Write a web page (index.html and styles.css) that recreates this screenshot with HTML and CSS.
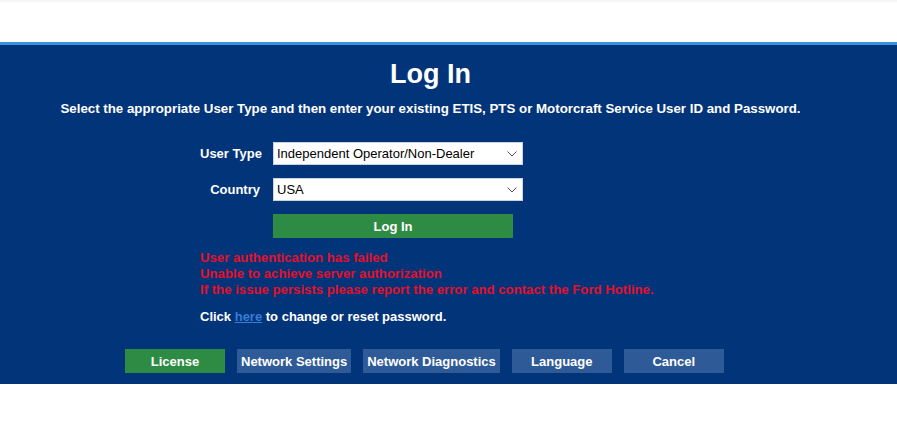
FILE: index.html
```html
<!DOCTYPE html>
<html>
<head>
<meta charset="utf-8">
<link rel="stylesheet" href="styles.css">
</head>
<body>
<div class="top"></div>
<main class="panel">
  <div class="content">
    <h1 class="title">Log In</h1>
    <p class="intro">Select the appropriate User Type and then enter your existing ETIS, PTS or Motorcraft Service User ID and Password.</p>
    <div class="form">
      <label class="label">User Type</label>
      <div class="select"><span>Independent Operator/Non-Dealer</span><svg class="chev" width="10" height="6" viewBox="0 0 10 6"><path d="M0.5 0.5 L5 5 L9.5 0.5" fill="none" stroke="#555" stroke-width="1"/></svg></div>
      <label class="label">Country</label>
      <div class="select"><span>USA</span><svg class="chev" width="10" height="6" viewBox="0 0 10 6"><path d="M0.5 0.5 L5 5 L9.5 0.5" fill="none" stroke="#555" stroke-width="1"/></svg></div>
      <span></span>
      <button class="btn btn-green login">Log In</button>
    </div>
    <div class="errors">
      <div>User authentication has failed</div>
      <div>Unable to achieve server authorization</div>
      <div>If the issue persists please report the error and contact the Ford Hotline.</div>
    </div>
    <p class="reset">Click <a href="#">here</a> to change or reset password.</p>
    <div class="actions">
      <button class="btn btn-green w100">License</button>
      <button class="btn btn-blue">Network Settings</button>
      <button class="btn btn-blue">Network Diagnostics</button>
      <button class="btn btn-blue w100">Language</button>
      <button class="btn btn-blue w100">Cancel</button>
    </div>
  </div>
</main>
</body>
</html>
```
FILE: styles.css
```css
* { box-sizing: border-box; }
html, body { margin: 0; padding: 0; background: #fff; }
body { font-family: "Liberation Sans", Arial, sans-serif; }
.top {
  height: 42px;
  background: linear-gradient(#f2f2f2 0, #fff 3px);
}
.panel {
  background: #023479;
  border-top: 3px solid #3b93dc;
  height: 342px;
}
.content {
  width: 861px;
  padding-top: 14px;
}
.title {
  margin: 0;
  text-align: center;
  color: #fff;
  font-size: 27px;
  font-weight: bold;
  line-height: 30px;
}
.intro {
  margin: 12px 0 0;
  text-align: center;
  color: #fff;
  font-size: 13.3px;
  font-weight: bold;
  line-height: 16px;
}
.form {
  display: grid;
  grid-template-columns: 60px 250px;
  column-gap: 13px;
  row-gap: 13px;
  margin: 25px 0 0 200px;
  align-items: center;
}
.label {
  color: #fff;
  font-size: 13px;
  font-weight: bold;
  text-align: right;
  white-space: nowrap;
}
.select {
  height: 23px;
  background: #fff;
  border: 1px solid #c9d3e0;
  display: flex;
  align-items: center;
  justify-content: space-between;
  padding: 0 5px 0 3px;
  font-size: 13px;
  color: #000;
}
.btn {
  border: 0;
  font-family: "Liberation Sans", Arial, sans-serif;
  font-weight: bold;
  font-size: 13px;
  color: #fff;
  height: 24px;
  padding: 0 4px;
  cursor: pointer;
}
.btn-green { background: #2e8b43; }
.btn-blue { background: #2e5a98; }
.login { width: 240px; height: 24px; margin-top: 0; }
.errors {
  margin: 12px 0 0 200px;
  color: #e3102c;
  font-size: 13.2px;
  font-weight: bold;
  line-height: 16px;
}
.reset {
  margin: 11px 0 0 200px;
  color: #fff;
  font-size: 13px;
  font-weight: bold;
  line-height: 16px;
}
.reset a { color: #3a7bd5; }
.actions {
  display: flex;
  gap: 12px;
  margin: 24px 0 0 125px;
}
.w100 { width: 100px; }
```
